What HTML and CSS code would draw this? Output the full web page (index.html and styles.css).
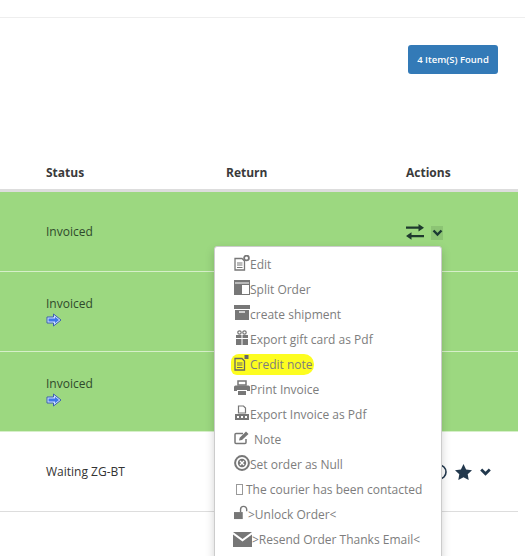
FILE: index.html
```html
<!DOCTYPE html>
<html lang="en">
<head>
    <meta charset="UTF-8">
    <title>Orders</title>
    <meta name="viewport" content="width=device-width, initial-scale=1">
    <link rel="stylesheet" href="styles.css">
</head>
<body>
<div class="topbar"></div>
<div class="found-row">
    <span class="found-btn">4 Item(S) Found</span>
</div>

<div class="orders">
    <div class="row head">
        <div>Status</div>
        <div>Return</div>
        <div>Actions</div>
    </div>

    <div class="row order paid">
        <div>Invoiced</div>
        <div></div>
        <div class="actions">
            <svg class="swap" width="18" height="16" viewBox="0 0 18 16"><path d="M0 2.500h12.500V0L18 3.700l-5.500 3.700V4.800H0zM18 8.700v2.300H5.500V8.300L0 12l5.500 3.700v-2.400H18z" fill="#1f3a2e"/></svg>
            <span class="caret-box"><svg width="11" height="8" viewBox="0 0 11 8"><path d="M1.500 1.500l4 4 4-4" fill="none" stroke="#1b3a33" stroke-width="2.400"/></svg></span>
        </div>
    </div>
    <div class="row order paid">
        <div>
            Invoiced
            <svg class="go" width="16" height="14" viewBox="0 0 16 14"><path d="M1 4h6.500V1L15 7l-7.500 6v-3H1z" fill="#cfe0ff" stroke="#3a5fb0" stroke-width="1"/><path d="M2.500 5.500h6.500V3.800L13 7l-4 3.200V8.500H2.500z" fill="#3f76ea"/></svg>
        </div>
        <div></div>
        <div></div>
    </div>
    <div class="row order paid">
        <div>
            Invoiced
            <svg class="go" width="16" height="14" viewBox="0 0 16 14"><path d="M1 4h6.500V1L15 7l-7.500 6v-3H1z" fill="#cfe0ff" stroke="#3a5fb0" stroke-width="1"/><path d="M2.500 5.500h6.500V3.800L13 7l-4 3.200V8.500H2.500z" fill="#3f76ea"/></svg>
        </div>
        <div></div>
        <div></div>
    </div>
    <div class="row order">
        <div>Waiting ZG-BT</div>
        <div></div>
        <div class="actions end">
            <svg width="16" height="16" viewBox="0 0 16 16"><circle cx="8" cy="8" r="7" fill="none" stroke="#22384d" stroke-width="1.600"/></svg>
            <svg width="17" height="16" viewBox="0 0 17 16"><path d="M8.500 0l2.600 5.400 5.900.8-4.300 4.100 1 5.700-5.200-2.800L3.300 16l1-5.700L0 6.200l5.900-.8z" fill="#22384d"/></svg>
            <svg class="caret" width="11" height="8" viewBox="0 0 11 8"><path d="M1.200 1.500l4.300 4.300 4.300-4.300" fill="none" stroke="#22384d" stroke-width="2.800"/></svg>
        </div>
    </div>

    <ul class="menu">
        <li>
            <svg class="ico" width="16" height="16" viewBox="0 0 16 16"><path d="M1 3.500h7l2.500 2.500v9H1z" fill="none" stroke="#777" stroke-width="1.300"/><path d="M3 8h5.500M3 10h5.500M3 12.500h5.500" stroke="#777"/><circle cx="12.500" cy="3" r="2.400" fill="none" stroke="#777" stroke-width="1.800"/></svg>
            <span>Edit</span>
        </li>
        <li>
            <svg class="ico" width="16" height="16" viewBox="0 0 16 16"><path d="M0 0h16v15H0z" fill="#777"/><path d="M8 5h7v9H8z" fill="#fff"/><path d="M1 3h14" stroke="#fff"/></svg>
            <span>Split Order</span>
        </li>
        <li>
            <svg class="ico" width="16" height="15" viewBox="0 0 16 15"><path d="M0 0h16v4H0zM1 5h14v10H1z" fill="#777"/><path d="M5 7h6" stroke="#fff" stroke-width="1.300"/></svg>
            <span>create shipment</span>
        </li>
        <li>
            <svg class="ico" width="16" height="16" viewBox="0 0 16 16"><path d="M2 5h12v3H2zM2 9h12v6H2z" fill="#777"/><path d="M8 4v11" stroke="#fff"/><circle cx="5.500" cy="2.500" r="1.700" fill="none" stroke="#777" stroke-width="1.200"/><circle cx="10.500" cy="2.500" r="1.700" fill="none" stroke="#777" stroke-width="1.200"/></svg>
            <span>Export gift card as Pdf</span>
        </li>
        <li>
            <span class="marker">
                <svg class="ico" width="16" height="16" viewBox="0 0 16 16"><path d="M1 3.500h7l2.500 2.500v9H1z" fill="none" stroke="#666" stroke-width="1.300"/><path d="M3 8h5.500M3 10h5.500M3 12.500h5.500" stroke="#666"/><path d="M10.500 0h4v4h-4z" fill="#666"/></svg>
                <span>Credit note</span>
            </span>
        </li>
        <li>
            <svg class="ico" width="16" height="16" viewBox="0 0 16 16"><path d="M4 1h8v4H4z" fill="none" stroke="#777" stroke-width="1.500"/><path d="M1.500 5.500h13a1.500 1.500 0 0 1 1.500 1.500v4h-3v-1H3v1H0V7a1.500 1.500 0 0 1 1.500-1.500zM4 11h8v4H4z" fill="#777"/></svg>
            <span>Print Invoice</span>
        </li>
        <li>
            <svg class="ico" width="16" height="16" viewBox="0 0 16 16"><path d="M4.500 1h5l2 2v5h-7z" fill="none" stroke="#777" stroke-width="1.200"/><path d="M1 9h14v6H1z" fill="#777"/><path d="M3 12h2M7 12h2M11 12h2" stroke="#fff" stroke-width="2"/></svg>
            <span>Export Invoice as Pdf</span>
        </li>
        <li>
            <svg class="ico note" width="16" height="14" viewBox="0 0 16 14"><path d="M9 2.500H2A1 1 0 0 0 1 3.500v8a1 1 0 0 0 1 1h9a1 1 0 0 0 1-1V8" fill="none" stroke="#777" stroke-width="1.500"/><path d="M5 9.500l.7-2.800L12 .5 14.500 3 8 9z" fill="#777"/></svg>
            <span>Note</span>
        </li>
        <li>
            <svg class="ico" width="16" height="16" viewBox="0 0 16 16"><circle cx="8" cy="8" r="6.900" fill="none" stroke="#777" stroke-width="2"/><circle cx="8" cy="8" r="4.200" fill="#777"/><path d="M6 6l4 4M10 6l-4 4" stroke="#fff" stroke-width="1.300"/></svg>
            <span>Set order as Null</span>
        </li>
        <li>
            <span class="nofont"></span>
            <span>The courier has been contacted</span>
        </li>
        <li>
            <svg class="ico lock" width="14" height="15" viewBox="0 0 16 15"><path d="M0 7h10v8H0z" fill="#777"/><path d="M7.500 7V4a3.500 3.500 0 0 1 7 0v2" fill="none" stroke="#777" stroke-width="1.600"/></svg>
            <span>&gt;Unlock Order&lt;</span>
        </li>
        <li>
            <svg class="ico mail" width="19" height="15" viewBox="0 0 19 15"><path d="M0 0h19L9.500 7zM0 2.500L9.500 9.500 19 2.500V15H0z" fill="#777"/></svg>
            <span>&gt;Resend Order Thanks Email&lt;</span>
        </li>
    </ul>
</div>
</body>
</html>
```

FILE: styles.css
```css
body {
    margin: 0;
    height: 556px;
    overflow: hidden;
    background-color: white;
    font-family: "Open Sans", sans-serif;
    font-size: 12px;
    color: #333333;
}

.topbar {
    height: 17px;
    border-bottom: 1px solid #eeeeee;
}

.found-row {
    display: flex;
    align-items: flex-start;
    justify-content: flex-end;
    padding: 27px 27px 0 0;
    height: 112px;
}

.found-btn {
    width: 90px;
    height: 29px;
    line-height: 29px;
    text-align: center;
    background-color: #337ab7;
    border-radius: 3px;
    color: white;
    font-size: 9.5px;
    font-weight: 600;
    white-space: nowrap;
}

.orders {
    position: relative;
    width: 518px;
}

.row {
    display: grid;
    grid-template-columns: 226px 180px 112px;
    align-items: center;
}

.row > div:first-child {
    padding-left: 46px;
}

.head {
    height: 31px;
    padding-bottom: 1px;
    border-bottom: 3px solid #dddddd;
    font-weight: 700;
    color: #3a3a3a;
}

.order {
    height: 79px;
    border-bottom: 1px solid #dddddd;
}

.paid {
    background-color: #9cd880;
    border-bottom-color: #d6efc9;
    color: #2f4a2c;
}

.actions {
    display: flex;
    align-items: center;
    gap: 7px;
}

.actions.end {
    justify-content: flex-end;
    padding-right: 27px;
    gap: 8px;
}

.caret-box {
    display: flex;
    align-items: center;
    justify-content: center;
    width: 12px;
    height: 14px;
    margin-top: 2px;
    background-color: #8cc474;
}

.go {
    display: block;
    margin: 1px 0 2px;
}

.menu {
    position: absolute;
    left: 214px;
    top: 89px;
    width: 228px;
    box-sizing: border-box;
    margin: 0;
    padding: 5px 0 7px;
    list-style: none;
    background-color: white;
    border: 1px solid #cccccc;
    border-radius: 3px;
    box-shadow: 0 4px 10px rgba(0, 0, 0, 0.18);
    font-size: 12px;
    color: #7d7d7d;
}

.menu li {
    display: flex;
    align-items: center;
    height: 25px;
    padding-left: 19px;
    white-space: nowrap;
}

.ico {
    flex: none;
    margin-top: -4px;
}

.note {
    margin-right: 4px;
}

.mail {
    margin-left: -1px;
    margin-top: 0;
}

.marker {
    display: flex;
    align-items: center;
    height: 21px;
    margin-left: -3px;
    padding: 0 1px 0 3px;
    background-color: #fdfd20;
    border-radius: 8px 10px 10px 6px;
}

.nofont {
    width: 7px;
    height: 11px;
    margin: 0 3px 0 2px;
    border: 1px solid #999999;
    box-sizing: border-box;
}
```
